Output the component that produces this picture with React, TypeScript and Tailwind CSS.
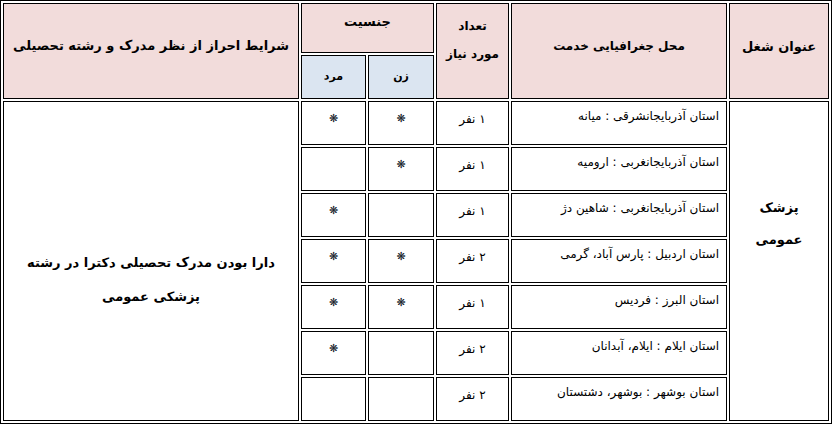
const rows = [
  { place: "استان آذربایجانشرقی : میانه", count: "۱ نفر", female: true, male: true },
  { place: "استان آذربایجانغربی : ارومیه", count: "۱ نفر", female: true, male: false },
  { place: "استان آذربایجانغربی : شاهین دژ", count: "۱ نفر", female: false, male: true },
  { place: "استان اردبیل : پارس آباد، گرمی", count: "۲ نفر", female: true, male: true },
  { place: "استان البرز : فردیس", count: "۱ نفر", female: true, male: true },
  { place: "استان ایلام : ایلام، آبدانان", count: "۲ نفر", female: false, male: true },
  { place: "استان بوشهر : بوشهر، دشتستان", count: "۲ نفر", female: false, male: false },
];

const font = "font-['DejaVu_Sans',sans-serif]";
const cell = "border border-black p-0";
const pink = "bg-[#f2dcdb]";
const blue = "bg-[#dbe5f1]";

function Star({ on }: { on: boolean }) {
  return <span className="text-[11px] leading-none text-[#111827]">{on ? "❋" : ""}</span>;
}

export default function App() {
  return (
    <div className={`w-[832px] h-[425px] bg-white overflow-hidden ${font}`}>
      <table
        dir="rtl"
        className="w-[832px] table-fixed border-separate border-spacing-[2px] border border-black text-black"
      >
        <colgroup>
          <col className="w-[100px]" />
          <col className="w-[216px]" />
          <col className="w-[73px]" />
          <col className="w-[66px]" />
          <col className="w-[65px]" />
          <col className="w-[296px]" />
        </colgroup>
        <thead>
          <tr className="h-[50px]">
            <th rowSpan={2} className={`${cell} ${pink} align-middle text-[13px] font-bold pb-[8px]`}>
              عنوان شغل
            </th>
            <th rowSpan={2} className={`${cell} ${pink} align-middle text-[12px] font-bold pb-[10px]`}>
              محل جغرافیایی خدمت
            </th>
            <th
              rowSpan={2}
              className={`${cell} ${pink} align-top text-[12px] font-bold leading-[28px] pt-[8px]`}
            >
              تعداد
              <br />
              مورد نیاز
            </th>
            <th colSpan={2} className={`${cell} ${pink} align-top text-[13px] font-bold pt-[8px]`}>
              جنسیت
            </th>
            <th
              rowSpan={2}
              className={`${cell} ${pink} align-middle whitespace-nowrap text-[13px] font-bold pb-[10px]`}
            >
              شرایط احراز از نظر مدرک و رشته تحصیلی
            </th>
          </tr>
          <tr className="h-[44px]">
            <th className={`${cell} ${blue} align-middle text-[11px] font-bold`}>زن</th>
            <th className={`${cell} ${blue} align-middle text-[11px] font-bold`}>مرد</th>
          </tr>
        </thead>
        <tbody>
          {rows.map((r, i) => (
            <tr key={i} className="h-[44px]">
              {i === 0 && (
                <td
                  rowSpan={rows.length}
                  className={`${cell} align-top text-center text-[13px] font-bold leading-[32px] pt-[90px]`}
                >
                  پزشک
                  <br />
                  عمومی
                </td>
              )}
              <td className={`${cell} align-top text-right text-[12px] leading-[20px] pt-[4px] pr-[7px]`}>
                {r.place}
              </td>
              <td className={`${cell} align-top text-center text-[12px] leading-[20px] pt-[7px]`}>
                {r.count}
              </td>
              <td className={`${cell} align-top text-center pt-[3px]`}>
                <Star on={r.female} />
              </td>
              <td className={`${cell} align-top text-center pt-[3px]`}>
                <Star on={r.male} />
              </td>
              {i === 0 && (
                <td
                  rowSpan={rows.length}
                  className={`${cell} align-top text-center text-[13px] font-bold leading-[34px] pt-[144px]`}
                >
                  دارا بودن مدرک تحصیلی دکترا در رشته
                  <br />
                  پزشکی عمومی
                </td>
              )}
            </tr>
          ))}
        </tbody>
      </table>
    </div>
  );
}
